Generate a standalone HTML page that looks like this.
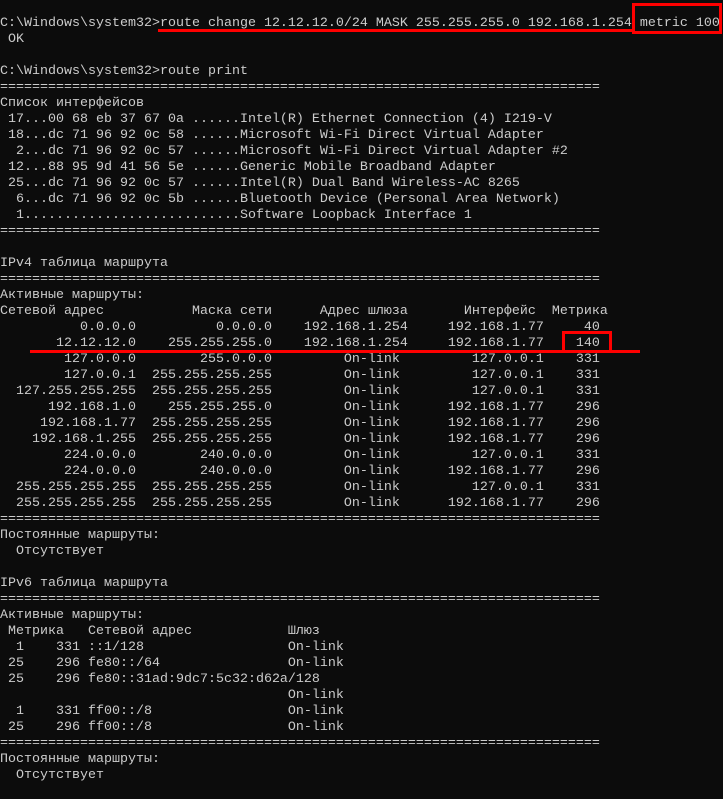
<!DOCTYPE html>
<html><head><meta charset="utf-8"><style>
html,body{margin:0;padding:0;background:#0c0c0c;width:723px;height:799px;overflow:hidden;position:relative}
pre{margin:0;position:absolute;left:0;top:16px;font-family:"Liberation Mono","DejaVu Sans Mono",monospace;font-size:13.33px;line-height:16px;color:#cccccc}
.r{position:absolute;background:#ff0000}
.b{position:absolute;border:3px solid #ff0000;box-sizing:border-box}
</style></head><body>
<pre>C:\Windows\system32&gt;route change 12.12.12.0/24 MASK 255.255.255.0 192.168.1.254 metric 100
 OK

C:\Windows\system32&gt;route print
===========================================================================
Список интерфейсов
 17...00 68 eb 37 67 0a ......Intel(R) Ethernet Connection (4) I219-V
 18...dc 71 96 92 0c 58 ......Microsoft Wi-Fi Direct Virtual Adapter
  2...dc 71 96 92 0c 57 ......Microsoft Wi-Fi Direct Virtual Adapter #2
 12...88 95 9d 41 56 5e ......Generic Mobile Broadband Adapter
 25...dc 71 96 92 0c 57 ......Intel(R) Dual Band Wireless-AC 8265
  6...dc 71 96 92 0c 5b ......Bluetooth Device (Personal Area Network)
  1...........................Software Loopback Interface 1
===========================================================================

IPv4 таблица маршрута
===========================================================================
Активные маршруты:
Сетевой адрес           Маска сети      Адрес шлюза       Интерфейс  Метрика
          0.0.0.0          0.0.0.0    192.168.1.254     192.168.1.77     40
       12.12.12.0    255.255.255.0    192.168.1.254     192.168.1.77    140
        127.0.0.0        255.0.0.0         On-link         127.0.0.1    331
        127.0.0.1  255.255.255.255         On-link         127.0.0.1    331
  127.255.255.255  255.255.255.255         On-link         127.0.0.1    331
      192.168.1.0    255.255.255.0         On-link      192.168.1.77    296
     192.168.1.77  255.255.255.255         On-link      192.168.1.77    296
    192.168.1.255  255.255.255.255         On-link      192.168.1.77    296
        224.0.0.0        240.0.0.0         On-link         127.0.0.1    331
        224.0.0.0        240.0.0.0         On-link      192.168.1.77    296
  255.255.255.255  255.255.255.255         On-link         127.0.0.1    331
  255.255.255.255  255.255.255.255         On-link      192.168.1.77    296
===========================================================================
Постоянные маршруты:
  Отсутствует

IPv6 таблица маршрута
===========================================================================
Активные маршруты:
 Метрика   Сетевой адрес            Шлюз
  1    331 ::1/128                  On-link
 25    296 fe80::/64                On-link
 25    296 fe80::31ad:9dc7:5c32:d62a/128
                                    On-link
  1    331 ff00::/8                 On-link
 25    296 ff00::/8                 On-link
===========================================================================
Постоянные маршруты:
  Отсутствует</pre>
<div class="r" style="left:158px;top:29px;width:476px;height:3px"></div>
<div class="b" style="left:632px;top:3px;width:90px;height:31px"></div>
<div class="r" style="left:30px;top:350px;width:610px;height:3px"></div>
<div class="b" style="left:562px;top:331px;width:50px;height:22px"></div>
</body></html>
